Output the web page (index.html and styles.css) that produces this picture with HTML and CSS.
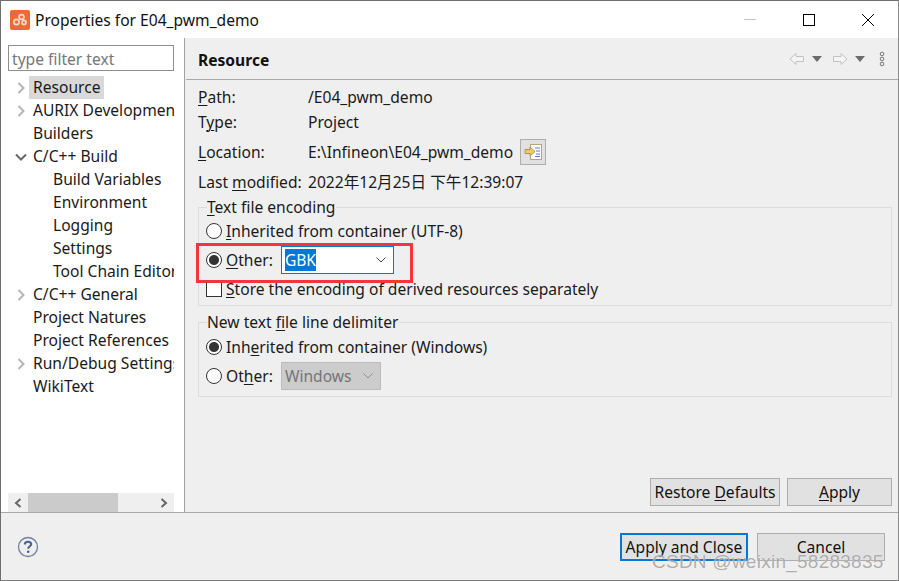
FILE: index.html
```html
<!DOCTYPE html>
<html lang="en">
<head>
<meta charset="utf-8">
<title>Properties for E04_pwm_demo</title>
<link rel="stylesheet" href="styles.css">
</head>
<body>
<div class="window">
  <header class="titlebar">
    <svg class="app-icon" width="20" height="20" viewBox="0 0 20 20"><rect width="20" height="20" rx="2" fill="#ee6a33"/><circle cx="6.500" cy="12" r="2.600" fill="none" stroke="#fbd5c2" stroke-width="1.800"/><circle cx="11.500" cy="7" r="2.400" fill="none" stroke="#fbd5c2" stroke-width="1.800"/><circle cx="14" cy="12.500" r="2" fill="none" stroke="#fbd5c2" stroke-width="1.800"/></svg>
    <span class="title">Properties for E04_pwm_demo</span>
    <div class="win-controls">
      <svg width="14" height="14" viewBox="0 0 14 14"><path d="M1 6.500H13" stroke="#c4c4c4"/></svg>
      <svg width="14" height="14" viewBox="0 0 14 14"><rect x="1.500" y="1.500" width="11" height="11" fill="none" stroke="#000"/></svg>
      <svg width="14" height="14" viewBox="0 0 14 14"><path d="M1 1L13 13M13 1L1 13" stroke="#000"/></svg>
    </div>
  </header>
  <div class="main">
    <aside class="sidebar">
      <div class="filter">type filter text</div>
      <ul class="tree">
        <li class="node"><svg class="tw" viewBox="0 0 12 12"><path d="M3.500 1L8.500 6L3.500 11" class="tw-closed"/></svg><span class="label selected">Resource</span></li>
        <li class="node"><svg class="tw" viewBox="0 0 12 12"><path d="M3.500 1L8.500 6L3.500 11" class="tw-closed"/></svg><span class="label">AURIX Development</span></li>
        <li class="node"><span class="tw"></span><span class="label">Builders</span></li>
        <li class="node"><svg class="tw" viewBox="0 0 12 12"><path d="M1 3.500L6 8.500L11 3.500" class="tw-open"/></svg><span class="label">C/C++ Build</span></li>
        <li class="node child"><span class="label">Build Variables</span></li>
        <li class="node child"><span class="label">Environment</span></li>
        <li class="node child"><span class="label">Logging</span></li>
        <li class="node child"><span class="label">Settings</span></li>
        <li class="node child"><span class="label">Tool Chain Editor</span></li>
        <li class="node"><svg class="tw" viewBox="0 0 12 12"><path d="M3.500 1L8.500 6L3.500 11" class="tw-closed"/></svg><span class="label">C/C++ General</span></li>
        <li class="node"><span class="tw"></span><span class="label">Project Natures</span></li>
        <li class="node"><span class="tw"></span><span class="label">Project References</span></li>
        <li class="node"><svg class="tw" viewBox="0 0 12 12"><path d="M3.500 1L8.500 6L3.500 11" class="tw-closed"/></svg><span class="label">Run/Debug Settings</span></li>
        <li class="node"><span class="tw"></span><span class="label">WikiText</span></li>
      </ul>
      <div class="hscroll">
        <svg class="sb-arrow" width="8" height="10" viewBox="0 0 8 10"><path d="M6.500 1L2 5L6.500 9" /></svg>
        <div class="sb-track"><div class="sb-thumb"></div></div>
        <svg class="sb-arrow" width="8" height="10" viewBox="0 0 8 10"><path d="M1.500 1L6 5L1.500 9" /></svg>
      </div>
    </aside>
    <section class="content">
      <div class="page-head">
        <h1 class="page-title">Resource</h1>
        <div class="page-tools">
          <svg width="16" height="14" viewBox="0 0 16 14"><path d="M1 7L7 1.500V4.500H14.500V9.500H7V12.500Z" fill="#f4f4f4" stroke="#c2c2c2"/></svg>
          <i class="caret"></i>
          <svg class="tool-fwd" width="16" height="14" viewBox="0 0 16 14"><path d="M15 7L9 1.500V4.500H1.500V9.500H9V12.500Z" fill="#f4f4f4" stroke="#c2c2c2"/></svg>
          <i class="caret"></i>
          <svg class="tool-menu" width="6" height="16" viewBox="0 0 6 16"><g fill="none" stroke="#777"><circle cx="3" cy="3" r="1.800"/><circle cx="3" cy="8" r="1.800"/><circle cx="3" cy="13" r="1.800"/></g></svg>
        </div>
      </div>
      <div class="page-body">
        <dl class="info">
          <dt><u>P</u>ath:</dt><dd>/E04_pwm_demo</dd>
          <dt>T<u>y</u>pe:</dt><dd>Project</dd>
          <dt class="tall"><u>L</u>ocation:</dt>
          <dd class="tall">E:\Infineon\E04_pwm_demo
            <span class="icon-btn"><svg width="18" height="16" viewBox="0 0 18 16"><rect x="6.500" y="0.500" width="11" height="15" fill="#fff" stroke="#b9a77a"/><path d="M11 4h5M12 7h4M12 10h4M11 12.500h5" stroke="#5a7fb0"/><path d="M1 5.500H6V3L11 7.500L6 12V9.500H1Z" fill="#f1c85c" stroke="#a8853a" stroke-width=".8"/></svg></span>
          </dd>
          <dt>Last <u>m</u>odified:</dt><dd>2022年12月25日 下午12:39:07</dd>
        </dl>
        <fieldset class="group group-encoding">
          <legend><u>T</u>ext file encoding</legend>
          <div class="opt"><span class="radio"></span><span><u>I</u>nherited from container (UTF-8)</span></div>
          <div class="opt opt-other"><span class="radio on"></span><span><u>O</u>ther:</span>
            <span class="combo focus"><span class="sel">GBK</span><svg class="chev" width="10" height="6" viewBox="0 0 10 6"><path d="M0.500 0.500L5 5L9.500 0.500" /></svg></span>
          </div>
          <div class="opt"><span class="check"></span><span><u>S</u>tore the encoding of derived resources separately</span></div>
        </fieldset>
        <fieldset class="group group-delim">
          <legend>New text <u>f</u>ile line delimiter</legend>
          <div class="opt"><span class="radio on"></span><span>Inh<u>e</u>rited from container (Windows)</span></div>
          <div class="opt"><span class="radio"></span><span>Ot<u>h</u>er:</span>
            <span class="combo disabled"><span>Windows</span><svg class="chev" width="10" height="6" viewBox="0 0 10 6"><path d="M0.500 0.500L5 5L9.500 0.500" /></svg></span>
          </div>
        </fieldset>
        <div class="page-actions">
          <button class="btn restore">Restore <u>D</u>efaults</button>
          <button class="btn apply"><u>A</u>pply</button>
        </div>
      </div>
    </section>
  </div>
  <footer class="footer">
    <svg class="help" width="22" height="22" viewBox="0 0 22 22"><circle cx="11" cy="11" r="9.500" fill="none" stroke="#6f7f9f" stroke-width="1.300"/><path d="M7.800 8.500C7.800 6.700 9.200 5.800 11 5.800C12.900 5.800 14.200 6.800 14.200 8.300C14.200 10.300 11.200 10.400 11.200 12.800" fill="none" stroke="#4d6288" stroke-width="2"/><circle cx="11.200" cy="15.800" r="1.300" fill="#4d6288"/></svg>
    <div class="footer-actions">
      <button class="btn default">Apply and Close</button>
      <button class="btn cancel">Cancel</button>
    </div>
  </footer>
  <div class="highlight"></div>
  <div class="watermark">CSDN @weixin_58283835</div>
</div>
</body>
</html>
```
FILE: styles.css
```css
* { box-sizing: border-box; }
html, body { margin: 0; padding: 0; }
body {
  width: 899px;
  height: 581px;
  overflow: hidden;
  font-family: "Noto Sans", "Noto Sans CJK SC", sans-serif;
  font-size: 15.6px;
  color: #1a1a1a;
}
u { text-underline-offset: 2px; text-decoration-thickness: 1px; }

.window {
  position: relative;
  width: 899px;
  height: 581px;
  display: flex;
  flex-direction: column;
  border: 1px solid #6f6f6f;
  border-bottom-color: #7d7d7d;
  border-right-color: #8a8a8a;
  background: #efefef;
}

.titlebar {
  height: 37px;
  flex: none;
  display: flex;
  align-items: center;
  padding-left: 9px;
  background: #fff;
}
.app-icon { flex: none; }
.title { margin-left: 5px; color: #111; }
.win-controls {
  margin-left: auto;
  display: flex;
  gap: 45px;
  padding-right: 23px;
  align-items: center;
}

.main { flex: 1; min-height: 0; display: flex; }

.sidebar {
  width: 184px;
  flex: none;
  background: #fff;
  border-right: 1px solid #a0a0a0;
  padding: 7px 10px 0 7px;
  display: flex;
  flex-direction: column;
}
.filter {
  height: 26px;
  flex: none;
  border: 1px solid #8f8f8f;
  padding-left: 3px;
  line-height: 26px;
  color: #777;
  background: #fff;
}
.tree {
  list-style: none;
  margin: 5px 0 0;
  padding: 0;
  flex: 1;
  min-height: 0;
  overflow: hidden;
}
.node {
  height: 23px;
  display: flex;
  align-items: center;
  white-space: nowrap;
}
.node.child { padding-left: 41px; }
.tw { width: 12px; height: 12px; flex: none; margin: 0 2px 0 7px; fill: none; }
.tw-closed { stroke: #b5b5b5; stroke-width: 2; fill: none; }
.tw-open { stroke: #666; stroke-width: 2; fill: none; }
.label { padding: 0 4px; height: 23px; line-height: 23px; }
.label.selected { background: #d9d9d9; }

.hscroll {
  height: 19px;
  flex: none;
  display: flex;
  align-items: center;
  background: #efefef;
}
.sb-arrow { flex: none; margin: 0 6px; fill: none; stroke: #666; stroke-width: 2; }
.sb-track { flex: 1; height: 19px; }
.sb-thumb { width: 90px; height: 19px; background: #cbcbcb; }

.content { flex: 1; min-width: 0; display: flex; flex-direction: column; }
.page-head {
  height: 42px;
  flex: none;
  margin-left: 1px;
  padding-left: 12px;
  display: flex;
  align-items: center;
  border-bottom: 1px solid #a8a8a8;
}
.page-title { margin: 2px 0 0; font-size: 15.6px; font-weight: 700; color: #111; }
.page-tools {
  margin-left: auto;
  padding-right: 13px;
  display: flex;
  align-items: center;
  gap: 7px;
}
.caret {
  width: 0;
  height: 0;
  border-left: 5px solid transparent;
  border-right: 5px solid transparent;
  border-top: 6px solid #6b6b6b;
}
.tool-fwd { margin-left: 3px; }
.tool-menu { margin-left: 7px; }

.page-body { flex: 1; min-height: 0; display: flex; flex-direction: column; padding: 4px 6px 6px 13px; }

.info {
  display: grid;
  grid-template-columns: 110px 1fr;
  grid-template-rows: 25px 25px 35px 25px;
  margin: 0;
  align-items: center;
}
.info dt, .info dd { margin: 0; white-space: nowrap; }
.info .tall { height: 35px; display: flex; align-items: center; }
.icon-btn {
  width: 26px;
  height: 26px;
  margin-left: 7px;
  background: #e1e1e1;
  border: 1px solid #adadad;
  display: flex;
  align-items: center;
  justify-content: center;
}

.group {
  margin: 0;
  padding: 0 7px;
  border: 1px solid #dcdcdc;
  min-width: 0;
}
.group legend { padding: 0 1px 0 0; margin-left: 1px; line-height: 20px; height: 20px; }
.group-encoding { height: 109px; margin-top: 3px; }
.group-delim { height: 85px; margin-top: 6px; }
.opt { display: flex; align-items: center; height: 29px; white-space: nowrap; }
.group-encoding .opt:first-of-type { margin-top: -1px; }

.radio {
  width: 16px;
  height: 16px;
  flex: none;
  margin-right: 4px;
  border: 1px solid #333;
  border-radius: 50%;
  background: #fff;
}
.radio.on { background: radial-gradient(circle, #333 0 4.500px, #fff 5.500px); }
.check {
  width: 16px;
  height: 16px;
  flex: none;
  margin-right: 4px;
  border: 1px solid #333;
  background: #fff;
}
.combo {
  height: 28px;
  display: flex;
  align-items: center;
  margin-left: 8px;
  padding-left: 3px;
  padding-right: 5px;
  border: 1px solid #adadad;
}
.combo.focus { width: 113px; border-color: #0078d7; background: #fff; }
.combo .sel { background: #0078d7; color: #fff; padding: 0; line-height: 22px; }
.combo.disabled { width: 100px; background: #cccccc; color: #757575; border-color: #bcbcbc; }
.chev { margin-left: auto; margin-right: 2px; fill: none; stroke: #444; }
.disabled .chev { stroke: #8f8f8f; }

.page-actions { margin-top: auto; display: flex; justify-content: flex-end; gap: 7px; }
.btn {
  height: 28px;
  padding: 0;
  font: inherit;
  color: #111;
  background: #e1e1e1;
  border: 1px solid #adadad;
  white-space: nowrap;
}
.restore { width: 130px; }
.apply { width: 105px; }

.footer {
  height: 68px;
  flex: none;
  display: flex;
  align-items: center;
  padding: 0 13px 0 16px;
  border-top: 1px solid #a8a8a8;
}
.help { flex: none; }
.footer-actions { margin-left: auto; display: flex; gap: 9px; }
.footer-actions .btn { width: 128px; }
.btn.default { border: 2px solid #0078d7; }

.highlight {
  position: absolute;
  left: 195px;
  top: 242px;
  width: 217px;
  height: 40px;
  border: 3px solid #f5353b;
  pointer-events: none;
}
.watermark {
  position: absolute;
  left: 651px;
  top: 550px;
  font-family: "Liberation Sans", sans-serif;
  font-size: 19px;
  letter-spacing: 0.250px;
  color: rgba(120, 120, 120, 0.6);
  text-shadow: 0 0 1px rgba(255, 255, 255, 0.9);
  white-space: nowrap;
}
```
